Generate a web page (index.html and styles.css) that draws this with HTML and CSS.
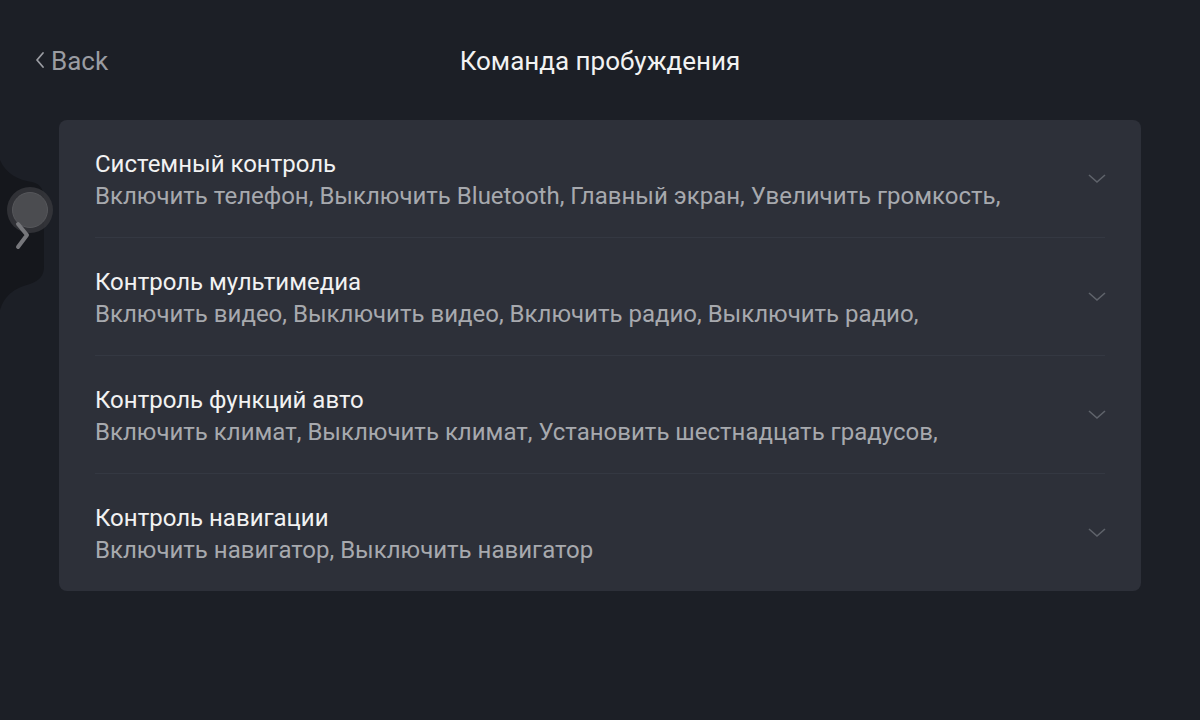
FILE: index.html
```html
<!DOCTYPE html>
<html lang="ru">

<head>
    <meta charset="UTF-8">
    <meta name="viewport" content="width=device-width, initial-scale=1.0">
    <title>Команда пробуждения</title>
    <link rel="stylesheet" href="styles.css">
</head>

<body>
    <div class="page">
        <div class="header">
            <div class="back">
                <svg class="back-icon" width="12" height="20" viewBox="0 0 12 20">
                    <path d="M9 3 L3 10 L9 17" fill="none" stroke="#9a9ca2" stroke-width="1.8" stroke-linecap="round" stroke-linejoin="round" />
                </svg>
                <span>Back</span>
            </div>
            <div class="title">Команда пробуждения</div>
            <div></div>
        </div>

        <div class="card">
            <div class="row">
                <div class="text">
                    <div class="row-title">Системный контроль</div>
                    <div class="row-sub">Включить телефон, Выключить Bluetooth, Главный экран, Увеличить громкость,</div>
                </div>
                <svg class="chevron" width="20" height="12" viewBox="0 0 20 12">
                    <path d="M2 2 L10 9 L18 2" fill="none" stroke="#5f636b" stroke-width="1.6" />
                </svg>
            </div>
            <div class="row">
                <div class="text">
                    <div class="row-title">Контроль мультимедиа</div>
                    <div class="row-sub">Включить видео, Выключить видео, Включить радио, Выключить радио,</div>
                </div>
                <svg class="chevron" width="20" height="12" viewBox="0 0 20 12">
                    <path d="M2 2 L10 9 L18 2" fill="none" stroke="#5f636b" stroke-width="1.6" />
                </svg>
            </div>
            <div class="row">
                <div class="text">
                    <div class="row-title">Контроль функций авто</div>
                    <div class="row-sub">Включить климат, Выключить климат, Установить шестнадцать градусов,</div>
                </div>
                <svg class="chevron" width="20" height="12" viewBox="0 0 20 12">
                    <path d="M2 2 L10 9 L18 2" fill="none" stroke="#5f636b" stroke-width="1.6" />
                </svg>
            </div>
            <div class="row">
                <div class="text">
                    <div class="row-title">Контроль навигации</div>
                    <div class="row-sub">Включить навигатор, Выключить навигатор</div>
                </div>
                <svg class="chevron" width="20" height="12" viewBox="0 0 20 12">
                    <path d="M2 2 L10 9 L18 2" fill="none" stroke="#5f636b" stroke-width="1.6" />
                </svg>
            </div>
        </div>
    </div>

    <!-- боковая ручка -->
    <svg class="handle" width="60" height="180" viewBox="0 0 60 180">
        <path d="M0 22 C6 36 18 42 32 44 C41 46 44 52 44 62 L44 128 C44 138 40 142 30 146 C14 150 4 158 0 172 Z" fill="#15171c" />
        <circle cx="30" cy="72" r="23" fill="#3a3b3f" opacity="0.75" />
        <circle cx="30" cy="72" r="17.5" fill="#4b4c50" />
        <circle cx="30" cy="72" r="17.5" fill="none" stroke="#56575b" stroke-width="1" />
        <path d="M18 86 L27 97 L18 109" fill="none" stroke="#76777b" stroke-width="4" stroke-linecap="round" stroke-linejoin="round" />
    </svg>
</body>

</html>
```

FILE: styles.css
```css
* {
    margin: 0;
    padding: 0;
    box-sizing: border-box;
}

html,
body {
    height: 100%;
}

body {
    background: #1c1f26;
    font-family: Roboto, "Noto Sans", sans-serif;
    overflow: hidden;
}

.page {
    padding: 0 59px;
}

.header {
    height: 120px;
    display: grid;
    grid-template-columns: 1fr auto 1fr;
    align-items: center;
    padding-top: 2px;
}

.back {
    display: flex;
    align-items: center;
    margin-left: -25px;
    color: #9a9ca2;
    font-size: 26px;
}

.back-icon {
    margin-right: 5px;
    margin-top: -3px;
}

.title {
    color: #f2f2f2;
    font-size: 26px;
}

.card {
    background: #2d3039;
    border-radius: 8px;
    padding: 0 36px;
}

.row {
    height: 118px;
    display: flex;
    align-items: center;
    justify-content: space-between;
    border-bottom: 1px solid #343842;
    padding-top: 3px;
}

.row:last-child {
    border-bottom: none;
    height: 117px;
}

.row-title {
    color: #f2f2f2;
    font-size: 24px;
    line-height: 32px;
}

.row-sub {
    color: #a7a9ae;
    font-size: 24px;
    line-height: 32px;
}

.chevron {
    margin-right: -2px;
    margin-top: -3px;
}

.handle {
    position: absolute;
    left: 0;
    top: 138px;
}
```
